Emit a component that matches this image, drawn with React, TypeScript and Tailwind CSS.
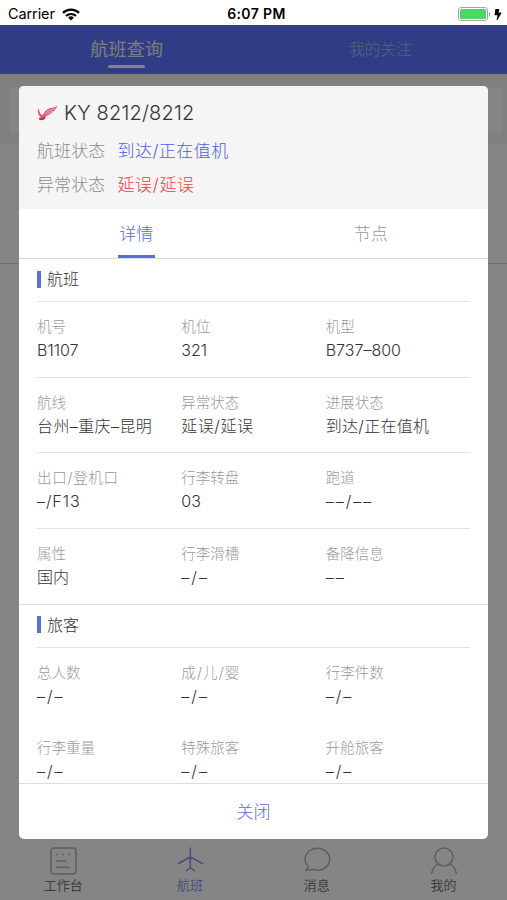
import type { ReactNode } from "react";
import { FaBolt } from "react-icons/fa";

type Field = { label: string; value: string; spacing?: string; labelSpacing?: string };

const flightRows: Field[][] = [
  [
    { label: "机号", value: "B1107" },
    { label: "机位", value: "321" },
    { label: "机型", value: "B737–800" },
  ],
  [
    { label: "航线", value: "台州–重庆–昆明", spacing: "tracking-[0.4px]" },
    { label: "异常状态", value: "延误/延误", spacing: "tracking-[0.5px]" },
    { label: "进展状态", value: "到达/正在值机", spacing: "tracking-[0.3px]" },
  ],
  [
    { label: "出口/登机口", value: "–/F13", spacing: "tracking-[0.9px]", labelSpacing: "tracking-[0.7px]" },
    { label: "行李转盘", value: "03" },
    { label: "跑道", value: "––/––", spacing: "tracking-[2px]" },
  ],
  [
    { label: "属性", value: "国内" },
    { label: "行李滑槽", value: "–/–", spacing: "tracking-[2px]" },
    { label: "备降信息", value: "––", spacing: "tracking-[2px]" },
  ],
];

const passengerRows: Field[][] = [
  [
    { label: "总人数", value: "–/–", spacing: "tracking-[2px]" },
    { label: "成/儿/婴", value: "–/–", spacing: "tracking-[2px]", labelSpacing: "tracking-[1.1px]" },
    { label: "行李件数", value: "–/–", spacing: "tracking-[2px]" },
  ],
  [
    { label: "行李重量", value: "–/–", spacing: "tracking-[2px]" },
    { label: "特殊旅客", value: "–/–", spacing: "tracking-[2px]" },
    { label: "升舱旅客", value: "–/–", spacing: "tracking-[2px]" },
  ],
];

const StatusBar = () => (
  <div className="h-[25px] shrink-0 bg-white text-black flex items-center justify-between pl-2 pr-[5px] pt-[3px]">
    <div className="flex items-center gap-[7px] w-[140px]">
      <span className="text-[14.5px] leading-5 font-normal tracking-[-0.1px]">Carrier</span>
      <svg width="18" height="13" viewBox="0 0 18 13" fill="none" stroke="black">
        <path d="M1 4.9a11.5 11.5 0 0 1 16 0" strokeWidth="2.3" />
        <path d="M4 8a7.2 7.2 0 0 1 10 0" strokeWidth="2.2" />
        <path d="M9 12.6 6.1 9.7a4.2 4.2 0 0 1 5.8 0z" fill="black" stroke="none" />
      </svg>
    </div>
    <span className="text-[14px] leading-5 font-semibold tracking-[0.4px] pl-[3px]">6:07 PM</span>
    <div className="flex items-center justify-end w-[140px]">
      <div className="w-[30px] h-[14px] rounded-[3px] border border-[#a6a6a6] p-px">
        <div className="h-full rounded-[1.5px] bg-[#4bd763]" />
      </div>
      <div className="w-[1.5px] h-[5px] ml-px rounded-r bg-[#a6a6a6]" />
      <FaBolt className="ml-[4px] w-[8px] h-[11px]" />
    </div>
  </div>
);

const TabItem = ({ label, active, children }: { label: string; active?: boolean; children: ReactNode }) => (
  <div className={active ? "flex-1 flex flex-col items-center text-[#9095ff]" : "flex-1 flex flex-col items-center text-[#b4b4b4]"}>
    <svg width="30" height="30" viewBox="0 0 30 30" fill="none" stroke="currentColor" strokeWidth="1.5" strokeLinecap="round" strokeLinejoin="round">
      {children}
    </svg>
    <span className={active ? "text-[13px] leading-[18px] font-normal" : "text-[13px] leading-[18px] font-normal text-[#777]"}>{label}</span>
  </div>
);

const TabBar = () => (
  <div className="h-[62px] shrink-0 border-t border-[#f5f5f5] pt-[7px] flex">
    <TabItem label="工作台">
      <rect x="3" y="2" width="25" height="26" rx="3" />
      <path d="M8.5 8.5h.8M14.5 8.5h.8M20.5 8.5h.8M9 15h8.5M9 21.3h12" />
    </TabItem>
    <TabItem label="航班" active>
      <path d="M15.300 2v20.500M15.300 11 3.500 17.500M15.300 11l12.200 6.500M15.300 21.500 11.500 24.700M15.300 21.500l4 3.200" />
    </TabItem>
    <TabItem label="消息">
      <path d="M6.200 20.600A12.300 11 0 1 1 16 24.300c-1.800 0-3.600-.4-5.200-1.100-2.300.8-4.700 1.100-7.300.9 1.600-.8 2.700-1.900 2.700-3.500z" />
    </TabItem>
    <TabItem label="我的">
      <circle cx="15" cy="11" r="9" />
      <path d="M8.700 18.300C5.500 20.200 3.300 23.500 2.600 27.500M21.300 18.300c3.200 1.900 5.400 5.200 6.100 9.200" />
    </TabItem>
  </div>
);

const Background = () => (
  <>
    <div className="h-[49px] shrink-0 bg-[#5d74ff] flex">
      <div className="flex-1 flex flex-col items-center pt-[12px]">
        <span className="text-[18px] leading-[26px] font-normal tracking-[0.3px] text-[#eee]">航班查询</span>
        <div className="mt-[2px] w-[37px] h-[3px] rounded-sm bg-white" />
      </div>
      <div className="flex-1 text-center pt-[12px] text-[15.7px] leading-[26px] text-[#b2bbe6]">我的关注</div>
    </div>
    <div className="h-[70px] shrink-0 bg-[#f5f5f5] px-[10px] pt-[13px] pr-[5px]">
      <div className="h-[46px] rounded bg-white" />
    </div>
    <div className="h-[120px] shrink-0 border-b border-[#d8d8d8]" />
    <div className="flex-1" />
    <TabBar />
  </>
);

const AirlineLogo = () => (
  <svg width="21" height="16" viewBox="0 0 21 16">
    <path d="M.8 3.500c1.500.5 1.500 2.600 2.200 4.300.5 1.300 1.500 2.200 3 1.900C7.700 6.300 10 4 13.500 3.100c2.700-.7 4.600-.9 6.800-2.400-.2 1.500-1 2.500-2 3.200.2.900-1 2.200-2.300 2.700-.3 1.200-1.800 2.200-3.400 2.500-.9 1.300-2.400 2-4 2.100.3 2.500-1.700 4.200-4.200 4.100-1.500-.1-2.700-1.100-2.700-2.500.8.500 1.700.5 2.400.1C1.700 11.200.5 8 .8 3.500z" fill="#e0607a" />
    <path d="M8.500 8.300c2.200-2.600 5-3.300 9-4.200M9.500 9.500c2-1.700 4-2.400 6.300-2.900" fill="none" stroke="#f8c7d0" strokeWidth="0.7" />
    <path d="M2.300 13.300c1.900 1.300 4.600.8 5.300-1.400" fill="none" stroke="#c9213f" strokeWidth="1.700" />
  </svg>
);

const SectionTitle = ({ title }: { title: string }) => (
  <div className="px-[18px]">
    <div className="h-[43px] border-b border-[#e3e3e3] flex items-center pb-0.5">
      <div className="w-[4px] h-[17px] bg-[#5b6be0] mr-[6px]" />
      <span className="text-[16px] leading-6 text-[#333]">{title}</span>
    </div>
  </div>
);

const FieldRow = ({ fields, className }: { fields: Field[]; className: string }) => (
  <div className={`grid grid-cols-3 pt-[15px] ${className}`}>
    {fields.map((field) => (
      <div key={field.label} className="whitespace-nowrap">
        <div className={`text-[14.5px] leading-5 text-[#999] ${field.labelSpacing ?? ""}`}>{field.label}</div>
        <div className={`text-[16px] leading-[26px] text-[#333] ${field.spacing ?? ""}`}>{field.value}</div>
      </div>
    ))}
  </div>
);

const FlightDialog = () => (
  <div className="w-[469px] h-[753px] rounded-[5px] bg-white overflow-hidden flex flex-col">
    <div className="h-[123px] shrink-0 bg-[#f5f5f5] px-[18px] pt-[13px]">
      <div className="flex items-center gap-[6px]">
        <AirlineLogo />
        <span className="text-[20px] leading-7 text-[#333] tracking-[0.2px]">KY 8212/8212</span>
      </div>
      <div className="mt-[7px] flex gap-[12px] text-[17px] leading-[34px]">
        <span className="text-[#8c8c8c] tracking-[0.1px]">航班状态</span>
        <span className="text-[#4b5de8] tracking-[0.5px]">到达/正在值机</span>
      </div>
      <div className="flex gap-[12px] text-[17px] leading-[34px]">
        <span className="text-[#8c8c8c] tracking-[0.1px]">异常状态</span>
        <span className="text-[#f8383e] tracking-[0.7px]">延误/延误</span>
      </div>
    </div>
    <div className="h-[50px] shrink-0 border-b border-[#ddd] flex text-[17px] leading-[26px]">
      <div className="flex-1 flex flex-col items-center pt-[12px] text-[#5b6be0]">
        详情
        <div className="mt-[8px] w-[37px] h-[3px] bg-[#5b6be0]" />
      </div>
      <div className="flex-1 text-center pt-[12px] text-[#999]">节点</div>
    </div>
    <div className="flex-1 min-h-0 overflow-hidden">
      <SectionTitle title="航班" />
      <div className="border-b border-[#ddd] px-[18px]">
        {flightRows.map((row, i) => (
          <FieldRow
            key={i}
            fields={row}
            className={i < flightRows.length - 1 ? "h-[75.5px] border-b border-[#e3e3e3]" : "h-[75px]"}
          />
        ))}
      </div>
      <SectionTitle title="旅客" />
      <div className="px-[18px]">
        {passengerRows.map((row, i) => (
          <FieldRow key={i} fields={row} className="h-[75px]" />
        ))}
      </div>
    </div>
    <div className="h-[56px] shrink-0 border-t border-[#ddd] text-center text-[17px] leading-[56px] text-[#5b6be8]">关闭</div>
  </div>
);

const App = () => {
  return (
    <div className="relative w-[507px] h-[900px] overflow-hidden flex flex-col bg-white font-light font-[Inter,'Noto_Sans_CJK_SC',sans-serif]">
      <StatusBar />
      <Background />
      <div className="absolute inset-x-0 top-[25px] bottom-0 bg-black/48 flex items-start justify-center pt-[61px]">
        <FlightDialog />
      </div>
    </div>
  );
};

export default App;
